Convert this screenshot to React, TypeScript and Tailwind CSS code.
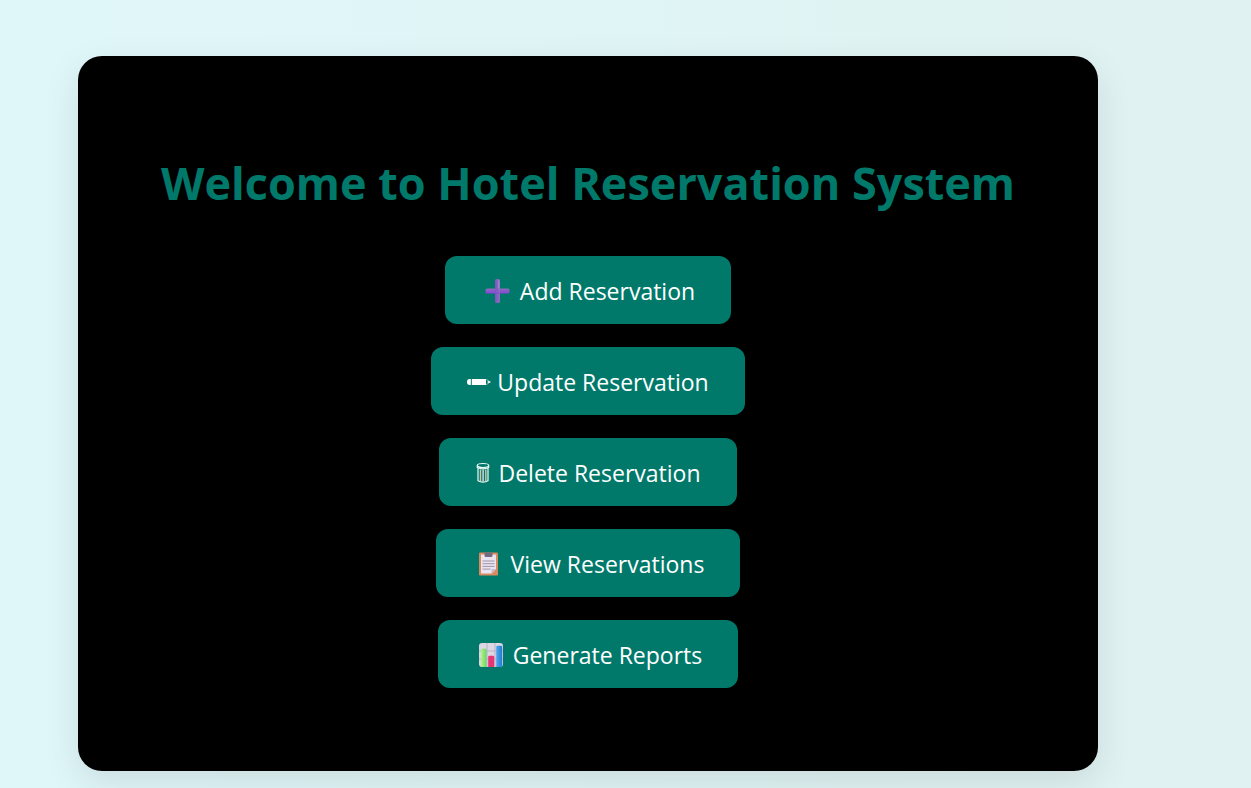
import type { ReactNode } from "react";

function PlusIcon() {
  return (
    <svg className="h-6 w-[33px]" viewBox="0 0 33 24" aria-hidden="true">
      <defs>
        <linearGradient id="plusBar" x1="0" y1="0" x2="0" y2="1">
          <stop offset="0" stopColor="#8a6fb8" />
          <stop offset="1" stopColor="#8a42dc" />
        </linearGradient>
        <linearGradient id="plusPost" x1="0" y1="0" x2="1" y2="0">
          <stop offset="0" stopColor="#7b55c4" />
          <stop offset="1" stopColor="#8d70bd" />
        </linearGradient>
      </defs>
      <rect x="4.5" y="9.5" width="24" height="5" rx="1.5" fill="url(#plusBar)" />
      <rect x="14" y="0" width="5" height="24" rx="1.5" fill="url(#plusPost)" />
      <path d="M14.5 14.2h4" stroke="#8049d6" strokeWidth="1" />
      <path d="M17.8 1.5v8" stroke="#a591cf" strokeWidth="1" />
    </svg>
  );
}

function PencilIcon() {
  return (
    <svg className="h-6 w-6" viewBox="0 0 24 24" aria-hidden="true">
      <path d="M3.8 9H2.5Q0 9 0 12t2.500 3h1.300z" fill="#fff" />
      <path d="M4.800 9H19v6H4.800z" fill="#fff" />
      <path d="M19.300 9.300 21 10.400v3.200l-1.700 1.100" fill="none" stroke="#d8e8cf" strokeWidth=".6" />
      <path d="m21.200 10.400 3 1.600-3 1.600z" fill="#fff" />
    </svg>
  );
}

function TrashIcon() {
  return (
    <svg className="h-6 w-[17px]" viewBox="0 0 17 24" fill="none" aria-hidden="true">
      <ellipse cx="8" cy="4.5" rx="5.7" ry="2" stroke="#eef8f4" strokeWidth="1.2" />
      <path d="M2.300 4.500v2q5.700 2.600 11.400 0v-2M3 7.300v12.400q5 2.800 10 0V7.300" stroke="#eef8f4" strokeWidth="1.2" />
      <path d="M5.500 8.500V20M10.800 8.500V20" stroke="#d6c4a6" strokeWidth="1.400" />
      <path d="M8.100 8.500v12" stroke="#d9eef5" strokeWidth="1.300" />
    </svg>
  );
}

function ClipboardIcon() {
  return (
    <svg className="h-6 w-[33px]" viewBox="0 0 33 24" aria-hidden="true">
      <rect x="7" y="0.5" width="19" height="23" rx="1.2" fill="#d98b5f" />
      <path d="M9 2.500h15V17l-4.500 4.500H9z" fill="#e9e4f0" />
      <path d="M24 17h-3.500q-1 0-1 1v3.500z" fill="#c6bdd3" />
      <path d="M12.500 .5h8v3q0 1.500-1.500 1.500h-5q-1.500 0-1.500-1.500z" fill="#756b80" />
      <path d="M10.500 9h12M10.500 11.700h12M10.500 14.400h12M10.500 17.100h8" stroke="#9d95ad" strokeWidth="1" />
    </svg>
  );
}

function ChartIcon() {
  return (
    <svg className="h-6 w-[33px]" viewBox="0 0 33 24" aria-hidden="true">
      <defs>
        <linearGradient id="greenBar" x1="0" y1="0" x2="1" y2="0">
          <stop offset="0" stopColor="#b5f47c" />
          <stop offset="1" stopColor="#69d66e" />
        </linearGradient>
        <linearGradient id="blueBar" x1="0" y1="0" x2="1" y2="0">
          <stop offset="0" stopColor="#4aa9ef" />
          <stop offset="1" stopColor="#2778cd" />
        </linearGradient>
      </defs>
      <rect x="5" y="0" width="24" height="24" rx="3" fill="#dcd6e5" />
      <path d="M5 8h24M5 16h24M13 0v24M21 0v24" stroke="#b9b1c7" strokeWidth="1" />
      <path d="M7 7q0-1.2 1.2-1.2h3.200q1.200 0 1.200 1.200v17H8q-1 0-1-1z" fill="url(#greenBar)" />
      <path d="M14.200 14q0-1.200 1.200-1.200h3.600q1.200 0 1.200 1.200v10h-6z" fill="#e63575" />
      <path d="M22.200 4q0-1.200 1.200-1.200h3.600q1.200 0 1.200 1.200v18.500q0 1.500-2 1.500h-4z" fill="url(#blueBar)" />
    </svg>
  );
}

const actions: { label: string; icon: ReactNode }[] = [
  { label: "Add Reservation", icon: <PlusIcon /> },
  { label: "Update Reservation", icon: <PencilIcon /> },
  { label: "Delete Reservation", icon: <TrashIcon /> },
  { label: "View Reservations", icon: <ClipboardIcon /> },
  { label: "Generate Reports", icon: <ChartIcon /> },
];

export default function App() {
  return (
    <div className="min-h-screen bg-linear-to-r from-[#e0f7fa] to-[#e0f2f1] pt-14 pr-[75px] pb-4 font-['Segoe_UI','Open_Sans',sans-serif]">
      <main className="mx-auto flex w-full max-w-[1020px] flex-col items-center rounded-3xl bg-black px-10 pt-24 pb-[83px] shadow-[0_12px_36px_rgba(0,0,0,0.1)]">
        <h1 className="text-center text-[45px] leading-[62px] font-bold text-[#00796b]">
          Welcome to Hotel Reservation System
        </h1>
        <nav aria-label="Reservation actions" className="mt-[42px] flex flex-col items-center gap-[23px]">
          {actions.map(({ label, icon }) => (
            <button
              key={label}
              type="button"
              className="flex h-17 cursor-pointer items-center gap-1.5 rounded-xl bg-[#00796b] px-9 pt-0.5 text-[23px] whitespace-nowrap text-white hover:bg-[#004d40]"
            >
              {icon}
              <span>{label}</span>
            </button>
          ))}
        </nav>
      </main>
    </div>
  );
}
